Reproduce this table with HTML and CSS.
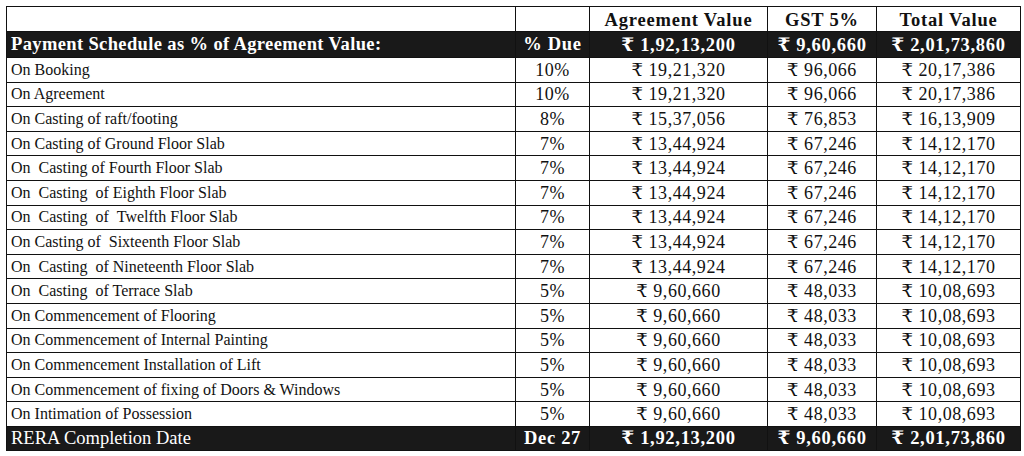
FILE: index.html
```html
<!DOCTYPE html>
<html>
<head>
<meta charset="utf-8">
<link rel="stylesheet" href="styles.css">
</head>
<body>
<table class="sched">
  <colgroup>
    <col class="c-stage"><col class="c-due"><col class="c-agr"><col class="c-gst"><col class="c-tot">
  </colgroup>
  <thead>
    <tr class="head">
      <th></th><th></th><th>Agreement Value</th><th>GST 5%</th><th>Total Value</th>
    </tr>
    <tr class="dark">
      <th class="left">Payment Schedule as % of Agreement Value:</th><th>% Due</th><th>₹ 1,92,13,200</th><th>₹ 9,60,660</th><th>₹ 2,01,73,860</th>
    </tr>
  </thead>
  <tbody>
    <tr><td class="left">On Booking</td><td>10%</td><td>₹ 19,21,320</td><td>₹ 96,066</td><td>₹ 20,17,386</td></tr>
    <tr><td class="left">On Agreement</td><td>10%</td><td>₹ 19,21,320</td><td>₹ 96,066</td><td>₹ 20,17,386</td></tr>
    <tr><td class="left">On Casting of raft/footing</td><td>8%</td><td>₹ 15,37,056</td><td>₹ 76,853</td><td>₹ 16,13,909</td></tr>
    <tr><td class="left">On Casting of Ground Floor Slab</td><td>7%</td><td>₹ 13,44,924</td><td>₹ 67,246</td><td>₹ 14,12,170</td></tr>
    <tr><td class="left">On &nbsp;Casting of Fourth Floor Slab</td><td>7%</td><td>₹ 13,44,924</td><td>₹ 67,246</td><td>₹ 14,12,170</td></tr>
    <tr><td class="left">On &nbsp;Casting &nbsp;of Eighth Floor Slab</td><td>7%</td><td>₹ 13,44,924</td><td>₹ 67,246</td><td>₹ 14,12,170</td></tr>
    <tr><td class="left">On &nbsp;Casting &nbsp;of &nbsp;Twelfth Floor Slab</td><td>7%</td><td>₹ 13,44,924</td><td>₹ 67,246</td><td>₹ 14,12,170</td></tr>
    <tr><td class="left">On Casting of &nbsp;Sixteenth Floor Slab</td><td>7%</td><td>₹ 13,44,924</td><td>₹ 67,246</td><td>₹ 14,12,170</td></tr>
    <tr><td class="left">On &nbsp;Casting &nbsp;of Nineteenth Floor Slab</td><td>7%</td><td>₹ 13,44,924</td><td>₹ 67,246</td><td>₹ 14,12,170</td></tr>
    <tr><td class="left">On &nbsp;Casting &nbsp;of Terrace Slab</td><td>5%</td><td>₹ 9,60,660</td><td>₹ 48,033</td><td>₹ 10,08,693</td></tr>
    <tr><td class="left">On Commencement of Flooring</td><td>5%</td><td>₹ 9,60,660</td><td>₹ 48,033</td><td>₹ 10,08,693</td></tr>
    <tr><td class="left">On Commencement of Internal Painting</td><td>5%</td><td>₹ 9,60,660</td><td>₹ 48,033</td><td>₹ 10,08,693</td></tr>
    <tr><td class="left">On Commencement Installation of Lift</td><td>5%</td><td>₹ 9,60,660</td><td>₹ 48,033</td><td>₹ 10,08,693</td></tr>
    <tr><td class="left">On Commencement of fixing of Doors &amp; Windows</td><td>5%</td><td>₹ 9,60,660</td><td>₹ 48,033</td><td>₹ 10,08,693</td></tr>
    <tr><td class="left">On Intimation of Possession</td><td>5%</td><td>₹ 9,60,660</td><td>₹ 48,033</td><td>₹ 10,08,693</td></tr>
  </tbody>
  <tfoot>
    <tr class="dark foot">
      <td class="left plain">RERA Completion Date</td><td>Dec 27</td><td>₹ 1,92,13,200</td><td>₹ 9,60,660</td><td>₹ 2,01,73,860</td>
    </tr>
  </tfoot>
</table>
</body>
</html>
```
FILE: styles.css
```css
html, body {
  margin: 0;
  padding: 0;
  background: #fff;
}
body {
  padding: 6px 0 0 6px;
  font-family: "Liberation Serif", "DejaVu Serif", serif;
  color: #111;
}
.sched {
  border-collapse: collapse;
  table-layout: fixed;
  width: 1014px;
}
.c-stage { width: 509px; }
.c-due { width: 74px; }
.c-agr { width: 178px; }
.c-gst { width: 109px; }
.c-tot { width: 144px; }
.sched th, .sched td {
  border: 1px solid #111;
  padding: 0 4px;
  text-align: center;
  white-space: nowrap;
  overflow: hidden;
}
.sched td {
  font-size: 18px;
  letter-spacing: 0.55px;
  height: 23.6px;
  line-height: 20px;
}
.sched td.left {
  text-align: left;
  font-size: 16px;
  letter-spacing: 0;
}
.head th {
  height: 24px;
  font-size: 18.5px;
  letter-spacing: 0.8px;
  font-weight: bold;
  vertical-align: bottom;
  line-height: 22px;
}
.dark th, .dark td {
  background: #191919;
  color: #fff;
  font-weight: bold;
  font-size: 18.5px;
  letter-spacing: 0.7px;
  height: 25px;
}
.dark .left {
  text-align: left;
  font-size: 18.5px;
  letter-spacing: 0.37px;
}
.foot td { height: 23px; }
.foot td.plain {
  font-weight: normal;
  font-size: 18.5px;
  letter-spacing: 0;
}
```
